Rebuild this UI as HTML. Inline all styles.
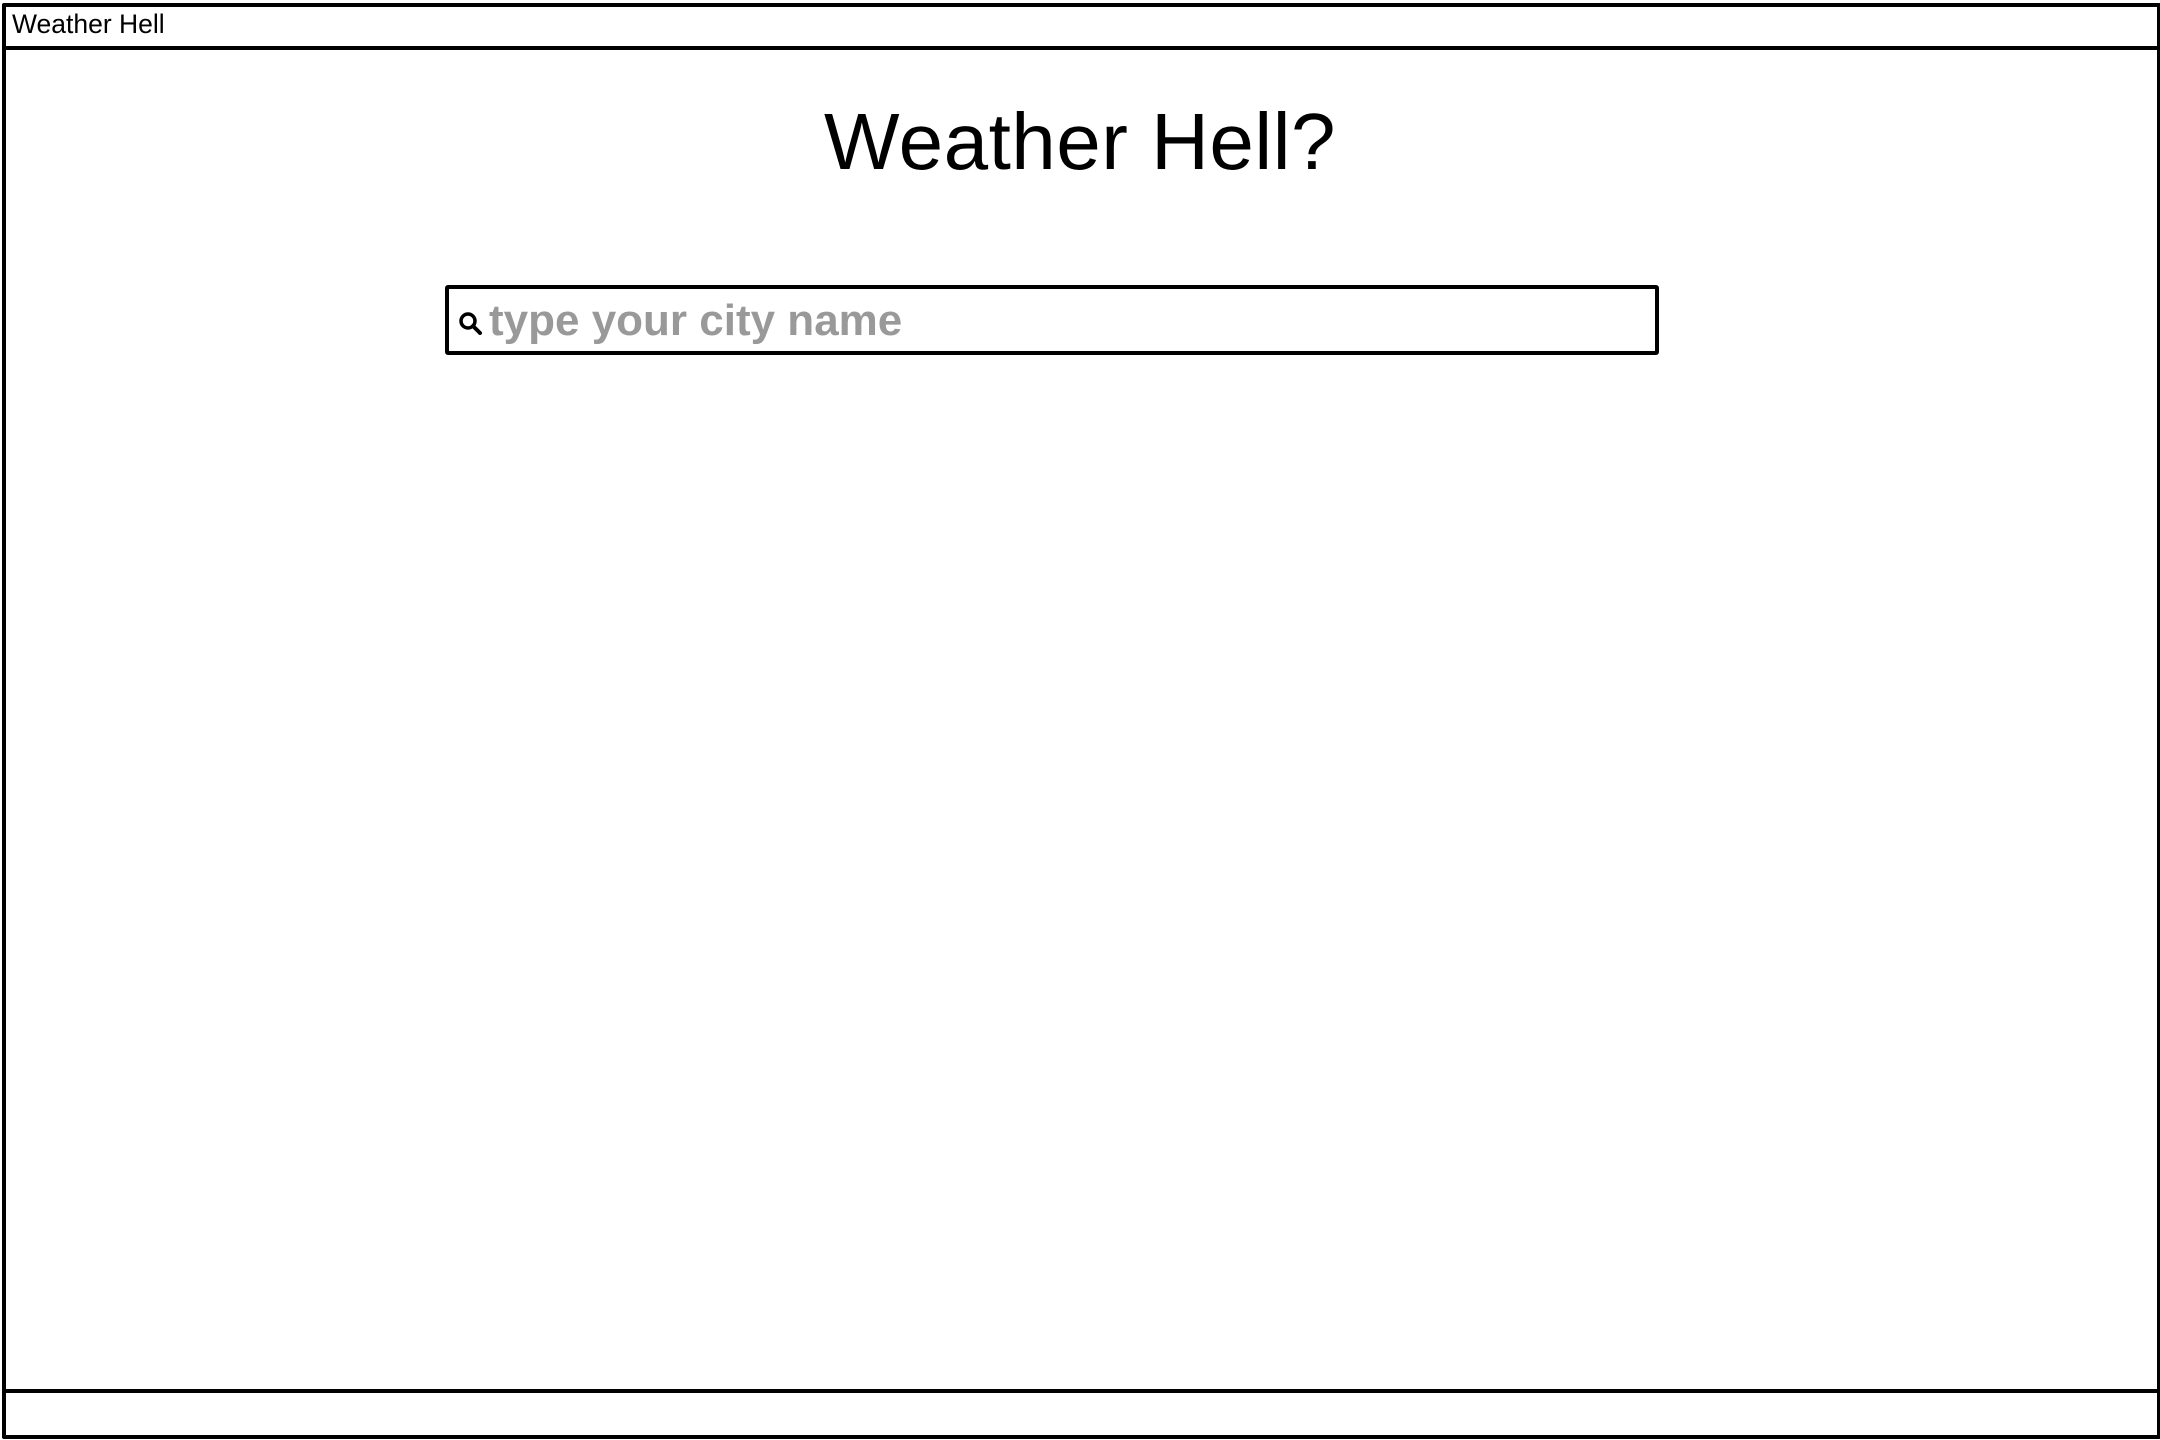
<!DOCTYPE html>
<html><head><meta charset="utf-8"><style>
html,body{margin:0;padding:0;width:2160px;height:1440px;background:#fff;overflow:hidden;font-family:"Liberation Sans",sans-serif;}
.frame{position:absolute;left:2px;top:3px;width:2151px;height:1428px;border:4px solid #000;border-radius:2px;}
.tbar{position:absolute;left:2px;top:46px;width:2159px;height:0;border-top:4px solid #000;}
.bbar{position:absolute;left:2px;top:1389px;width:2159px;height:0;border-top:4px solid #000;}
.ttl{position:absolute;left:12px;top:9px;font-size:26.5px;color:#000;}
h1{position:absolute;left:0;width:2160px;top:96px;margin:0;text-align:center;font-size:80px;font-weight:normal;letter-spacing:0.5px;}
.search{position:absolute;left:445px;top:285px;width:1206px;height:62px;border:4px solid #000;border-radius:3px;}
.ph{position:absolute;left:40px;top:7px;font-size:44px;color:#999;font-weight:bold;}
svg{position:absolute;left:9px;top:22px;}
</style></head><body>
<div class="frame"></div>
<div class="tbar"></div>
<div class="bbar"></div>
<div class="ttl">Weather Hell</div>
<h1>Weather Hell?</h1>
<div class="search">
<svg width="26" height="26" viewBox="0 0 26 26"><circle cx="10" cy="10" r="7" fill="none" stroke="#000" stroke-width="3.5"/><line x1="15" y1="15" x2="22" y2="22" stroke="#000" stroke-width="4" stroke-linecap="round"/></svg>
<div class="ph">type your city name</div>
</div>
</body></html>
